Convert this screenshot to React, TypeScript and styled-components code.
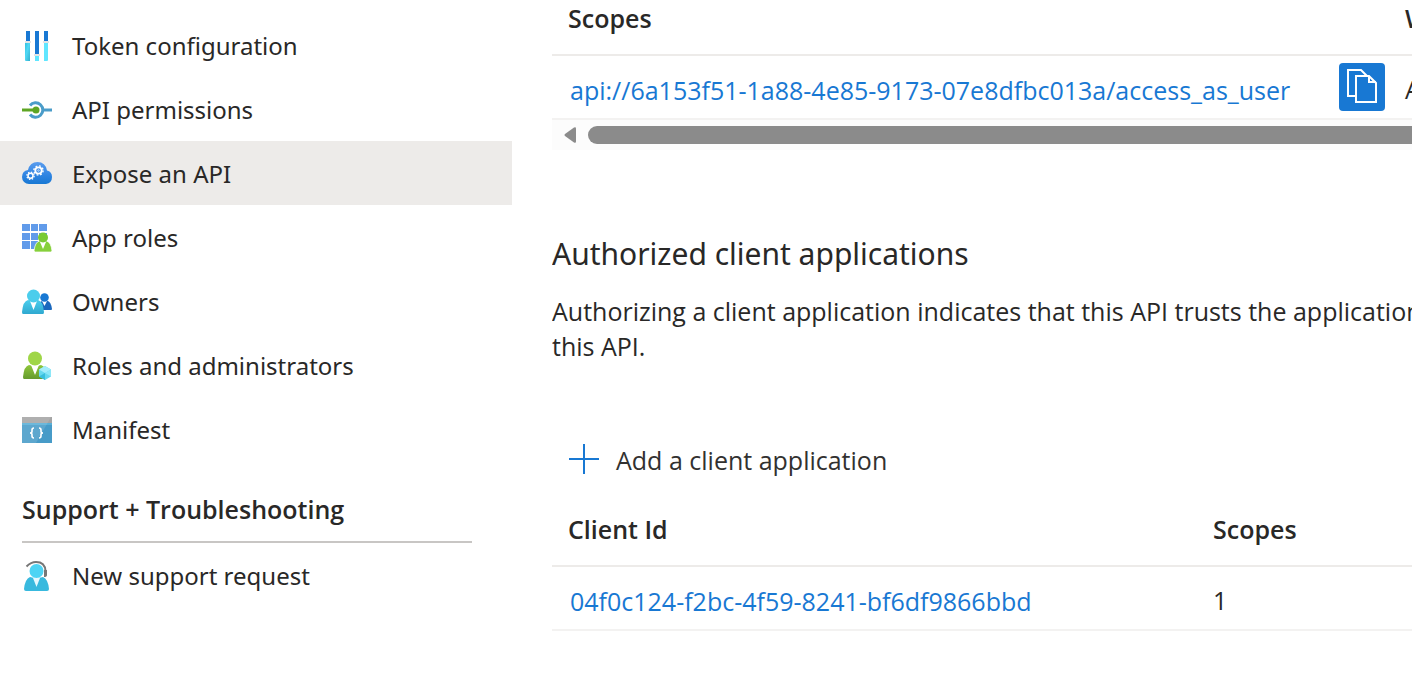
import React from "react";
import styled, { createGlobalStyle } from "styled-components";

const GlobalStyle = createGlobalStyle`
  *, *::before, *::after { box-sizing: border-box; }
  body {
    margin: 0;
    background: #fff;
    color: #292827;
    font-family: "Open Sans", "Noto Sans", sans-serif;
    font-size: 25px;
    line-height: 36px;
    overflow-x: hidden;
  }
`;

const Page = styled.div`
  display: grid;
  grid-template-columns: 512px minmax(0, 1fr);
  column-gap: 40px;
  overflow: hidden;
`;

const Sidebar = styled.nav`
  padding-top: 13px;
`;

const Menu = styled.ul`
  list-style: none;
  margin: 0;
  padding: 0;
`;

const MenuLink = styled.a<{ $active?: boolean }>`
  display: flex;
  align-items: center;
  gap: 20px;
  height: 64px;
  padding: 2px 22px 0;
  color: inherit;
  font-family: "Noto Sans", sans-serif;
  font-size: 24px;
  text-decoration: none;
  white-space: nowrap;
  background: ${(p) => (p.$active ? "#edebe9" : "transparent")};

  svg {
    flex: none;
  }
`;

const GroupTitle = styled.h2`
  margin: 30px 40px 0 22px;
  padding-bottom: 14px;
  border-bottom: 2px solid #c8c6c4;
  font-size: 25px;
  font-weight: 600;
`;

const Main = styled.main`
  min-width: 0;
  overflow: hidden;
  white-space: nowrap;
`;

const Table = styled.table`
  width: 1400px;
  table-layout: fixed;
  border-collapse: separate;
  border-spacing: 0;
  text-align: left;
`;

const HeadCell = styled.th<{ $width?: number; $height: number }>`
  width: ${(p) => (p.$width ? `${p.$width}px` : "auto")};
  height: ${(p) => p.$height}px;
  padding: 0 16px 18px;
  border-bottom: 2px solid #edebe9;
  font-weight: 600;
  vertical-align: bottom;
`;

const Cell = styled.td`
  height: 64px;
  padding: 0 16px;
  border-bottom: 2px solid #f3f2f1;
  vertical-align: middle;
`;

const TextCell = styled(Cell)`
  padding-top: 4px;
`;

const CellContent = styled.div`
  display: flex;
  align-items: center;
  justify-content: space-between;
`;

const Link = styled.a`
  display: inline-block;
  padding: 6px 2px 0;
  color: #1878d3;
  text-decoration: none;
`;

const CopyButton = styled.button`
  display: grid;
  place-items: center;
  width: 46px;
  height: 48px;
  margin-right: -12px;
  padding: 0;
  border: 0;
  border-radius: 4px;
  background: #1878d3;
`;

const ScrollTrack = styled.div`
  display: flex;
  align-items: center;
  gap: 12px;
  width: 1400px;
  height: 30px;
  padding-left: 12px;
  background: #fcfcfc;
`;

const ScrollArrow = styled.button`
  display: flex;
  padding: 0;
  border: 0;
  background: none;
`;

const ScrollThumb = styled.div`
  flex: 1;
  height: 18px;
  border-radius: 9px;
  background: #8b8b8b;
`;

const SectionTitle = styled.h2`
  margin: 80px 0 0;
  font-family: "Noto Sans", sans-serif;
  font-size: 30px;
  font-weight: 400;
  line-height: 48px;
`;

const Description = styled.p`
  margin: 16px 0 0;
  line-height: 35px;
`;

const AddButton = styled.button`
  display: flex;
  align-items: center;
  gap: 17px;
  height: 64px;
  margin-top: 63px;
  padding: 2px 17px 0;
  border: 0;
  background: none;
  color: #323130;
  font: inherit;

  svg {
    margin-bottom: 2px;
  }
`;

const Icon = ({ children }: { children: React.ReactNode }) => (
  <svg width="30" height="32" viewBox="0 0 30 32" aria-hidden="true">
    {children}
  </svg>
);

const TokenIcon = () => (
  <Icon>
    <defs>
      <linearGradient id="tk" x1="0" y1="0" x2="1" y2="1">
        <stop offset="0" stopColor="#32bedd" />
        <stop offset=".45" stopColor="#50d8f5" />
        <stop offset="1" stopColor="#32aecb" />
      </linearGradient>
    </defs>
    <path fill="url(#tk)" d="M3 12h5v19H4q-1 0-1-1z" />
    <path fill="#60e6ff" d="M13 25h4v6h-4zM22 12h4v18q0 1-1 1h-3z" />
    <path fill="#1878d3" d="M4 1h4v11H4zM13 1h4v23h-4zM22 1h4v11h-4z" />
    <path fill="#e4e4e4" d="M3 11h6v2H3zM12 24h6v2h-6zM21 11h6v2h-6z" />
  </Icon>
);

const PermissionsIcon = () => (
  <Icon>
    <path d="M8 11.500a7.200 7.200 0 1 1 0 9" fill="none" stroke="#4a9cc9" strokeWidth="3" />
    <path d="M22 16h8" stroke="#4a9cc9" strokeWidth="3" />
    <path d="M0 16h13" stroke="#5ea524" strokeWidth="3" />
    <circle cx="14" cy="16" r="3.500" fill="#5ea524" />
  </Icon>
);

const ExposeIcon = () => (
  <Icon>
    <defs>
      <linearGradient id="cl" x1="0" y1="0" x2="0" y2="1">
        <stop offset="0" stopColor="#5a9cee" />
        <stop offset=".6" stopColor="#2f84e2" />
        <stop offset="1" stopColor="#1878d3" />
      </linearGradient>
    </defs>
    <path fill="url(#cl)" d="M7 26a7 7 0 0 1-7-7q0-6 6-7Q8 4 15.500 4q8 0 9.500 8.500 5 1 5 6.500 0 6-6 7z" />
    <g fill="none" stroke="#fff">
      <circle cx="16.500" cy="12.500" r="3.200" strokeWidth="1.800" />
      <circle cx="16.500" cy="12.500" r="4.600" strokeWidth="1.400" strokeDasharray="1.800 1.810" />
      <circle cx="8.500" cy="17.800" r="2.500" strokeWidth="1.500" />
      <circle cx="8.500" cy="17.800" r="3.700" strokeWidth="1.200" strokeDasharray="1.450 1.450" />
      <circle cx="16.500" cy="12.500" r=".8" strokeWidth=".6" />
    </g>
  </Icon>
);

const RolesIcon = () => (
  <Icon>
    <path fill="#619bea" d="M0 2h8v7H0zM9 2h7v7H9zM17 2h8v7h-8zM0 11h8v7H0zM9 11h7v7H9zM17 11h8v7h-8zM0 19h8v8H0zM9 19h7v8H9z" />
    <path fill="#86d03b" stroke="#fff" strokeWidth=".7" d="M12 29q1-9 5.500-10 3.500 1 7 0 4.500 1 5.500 10l-1 1H13z" />
    <path fill="#fff" d="M18 20h6l-3 7z" />
    <circle cx="21" cy="15.500" r="5" fill="#79ca34" />
  </Icon>
);

const OwnersIcon = () => (
  <Icon>
    <defs>
      <linearGradient id="ow" x1="0" y1="0" x2="0" y2="1">
        <stop offset="0" stopColor="#4bcdec" />
        <stop offset="1" stopColor="#2fa9d0" />
      </linearGradient>
    </defs>
    <path fill="#1b68bd" d="M19 24h10q1 0 1-1-1-7-4-8h-6q-3 1-3 5z" />
    <path fill="#fff" d="M20 15h5l-2.500 5z" />
    <circle cx="22.500" cy="11.500" r="4.300" fill="#1878d3" />
    <path fill="url(#ow)" d="M0 26q1-11 6-12 5 2 10 0 5 1 6 12 0 2-1 2H1q-1 0-1-2z" />
    <path fill="#fff" d="M8 15h7l-3.500 9z" />
    <circle cx="11.500" cy="10" r="6.500" fill="#4bcdec" />
  </Icon>
);

const AdminIcon = () => (
  <Icon>
    <defs>
      <linearGradient id="ad" x1="0" y1="0" x2="0" y2="1">
        <stop offset="0" stopColor="#8fc63b" />
        <stop offset="1" stopColor="#659b2d" />
      </linearGradient>
    </defs>
    <path fill="url(#ad)" d="M1 27q1-11 6-12 6 2 12 0 5 1 6 12l-1 2H2q-1 0-1-2z" />
    <path fill="#fff" d="M9 15h8l-4 10z" />
    <circle cx="13" cy="8.500" r="7" fill="#9fd647" />
    <path fill="#66d8ef" d="m23 16 6 3.500v7L23 30l-6-3.500v-7z" />
    <path fill="#a5edfb" d="m23 16 6 3.500-6 3.500-6-3.500z" />
    <path fill="#38bfdd" d="M23 23v7l-6-3.500z" />
    <path fill="#8de7f8" d="m23 23 6-3.500v7z" />
  </Icon>
);

const ManifestIcon = () => (
  <Icon>
    <path fill="#479bc8" d="M0 9h30v20H0z" />
    <path fill="#a4a4a4" d="M0 3h30v6H0z" />
    <path fill="#58afd7" d="M0 9h30v2H0z" />
    <path fill="#fff" opacity=".12" d="M0 3h29L14 29H0z" />
    <path fill="none" stroke="#fff" strokeWidth="1.600" d="M12 14q-2 0-2 2v1.500q0 1.500-2 1.500 2 0 2 1.500V22q0 2 2 2M17 14q2 0 2 2v1.500q0 1.500 2 1.500-2 0-2 1.500V22q0 2-2 2" />
  </Icon>
);

const SupportIcon = () => (
  <Icon>
    <path fill="none" stroke="#777" strokeWidth="2" d="M4.500 6.500Q9 2 14 2q9 0 9.500 9v3" />
    <path fill="#777" d="M22 10h3v5q0 2-3 2z" />
    <path fill="#38b9de" d="M2 29q1-10 6-12 6 2 13 0 5 2 6 12 0 2-2 2H4q-2 0-2-2z" />
    <path fill="#e6f9ff" d="M11 18h7l-3.500 9z" />
    <circle cx="14.500" cy="11" r="7" fill="#4dd4f4" />
  </Icon>
);

const CopyIcon = () => (
  <svg width="30" height="36" viewBox="0 0 30 36" fill="none" stroke="#fff" strokeWidth="2" aria-hidden="true">
    <path d="M9 27H1V1h13l6 6" />
    <path d="M9 7v26h20V14l-7-7z" />
    <path d="M22 7v6h7" />
  </svg>
);

const items = [
  { label: "Token configuration", icon: <TokenIcon /> },
  { label: "API permissions", icon: <PermissionsIcon /> },
  { label: "Expose an API", icon: <ExposeIcon />, active: true },
  { label: "App roles", icon: <RolesIcon /> },
  { label: "Owners", icon: <OwnersIcon /> },
  { label: "Roles and administrators", icon: <AdminIcon /> },
  { label: "Manifest", icon: <ManifestIcon /> },
];

export default function App() {
  return (
    <>
      <GlobalStyle />
      <Page>
        <Sidebar>
          <Menu>
            {items.map((item) => (
              <li key={item.label}>
                <MenuLink href="#" $active={item.active}>
                  {item.icon}
                  {item.label}
                </MenuLink>
              </li>
            ))}
          </Menu>
          <GroupTitle>Support + Troubleshooting</GroupTitle>
          <Menu>
            <li>
              <MenuLink href="#">
                <SupportIcon />
                New support request
              </MenuLink>
            </li>
          </Menu>
        </Sidebar>
        <Main>
          <Table>
            <thead>
              <tr>
                <HeadCell $width={837} $height={56}>Scopes</HeadCell>
                <HeadCell $height={56}>Who can consent</HeadCell>
              </tr>
            </thead>
            <tbody>
              <tr>
                <Cell>
                  <CellContent>
                    <Link href="#">api://6a153f51-1a88-4e85-9173-07e8dfbc013a/access_as_user</Link>
                    <CopyButton aria-label="Copy">
                      <CopyIcon />
                    </CopyButton>
                  </CellContent>
                </Cell>
                <TextCell>Admins and users</TextCell>
              </tr>
            </tbody>
          </Table>
          <ScrollTrack>
            <ScrollArrow aria-label="Scroll left">
              <svg width="12" height="16" viewBox="0 0 12 16" aria-hidden="true">
                <path fill="#8b8b8b" d="M10 .5q2-1 2 1v13q0 2-2 1L1 9q-1-1 0-2z" />
              </svg>
            </ScrollArrow>
            <ScrollThumb />
          </ScrollTrack>
          <SectionTitle>Authorized client applications</SectionTitle>
          <Description>
            Authorizing a client application indicates that this API trusts the application
            <br />
            this API.
          </Description>
          <AddButton>
            <svg width="30" height="30" viewBox="0 0 30 30" aria-hidden="true">
              <path d="M15 0v30M0 15h30" stroke="#1878d3" strokeWidth="2" />
            </svg>
            Add a client application
          </AddButton>
          <Table>
            <thead>
              <tr>
                <HeadCell $width={645} $height={76}>Client Id</HeadCell>
                <HeadCell $height={76}>Scopes</HeadCell>
              </tr>
            </thead>
            <tbody>
              <tr>
                <Cell>
                  <Link href="#">04f0c124-f2bc-4f59-8241-bf6df9866bbd</Link>
                </Cell>
                <TextCell>1</TextCell>
              </tr>
            </tbody>
          </Table>
        </Main>
      </Page>
    </>
  );
}
